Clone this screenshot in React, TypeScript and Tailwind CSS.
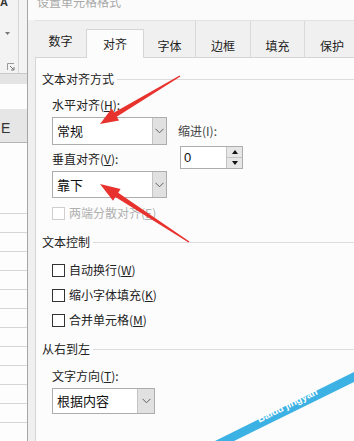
import React from "react";

function Chevron() {
  return (
    <svg width="9" height="6" viewBox="0 0 9 6">
      <polyline points="0.5,0.8 4.5,4.8 8.5,0.8" fill="none" stroke="#606060" strokeWidth="1" />
    </svg>
  );
}

function GroupHeader({ title, className }: { title: string; className: string }) {
  return (
    <div className={"flex items-center h-4 pl-[6px] " + className}>
      <span className="text-[12px] leading-4 text-[#222]">{title}</span>
      <div className="flex-1 ml-[3px] border-t border-[#dcdcdc]" />
    </div>
  );
}

function Check({ children, disabled, className }: { children: React.ReactNode; disabled?: boolean; className: string }) {
  return (
    <div className={"flex items-center h-4 " + className}>
      <div className={disabled ? "w-[13px] h-[13px] border border-[#cfcfcf] bg-white" : "w-[13px] h-[13px] border border-[#333] bg-white"} />
      <span className={disabled ? "ml-[4px] text-[12px] leading-4 text-[#b0b0b0]" : "ml-[4px] text-[12px] leading-4 text-[#222]"}>{children}</span>
    </div>
  );
}

export default function App() {
  const rows = Array.from({ length: 12 });
  return (
    <div className="w-[354px] h-[441px] overflow-hidden relative flex bg-white font-['Noto_Sans_CJK_SC','Noto_Sans',sans-serif]">
      {/* Excel background strip */}
      <div className="w-[28px] h-full flex flex-col border-r border-[#a6a6a6] bg-[#fdfdfd] shrink-0">
        <div className="h-[77px] flex bg-[#f3f3f3] border-b border-[#c8c8c8]">
          <div className="w-[19px] h-[73px] flex flex-col border-r border-[#d6d6d6]">
            <span className="-mt-[5px] text-[11px] leading-[14px] font-bold text-[#333] font-['Liberation_Sans',sans-serif]">A</span>
            <svg className="mt-[23px] ml-[5px]" width="5" height="3" viewBox="0 0 5 3">
              <polygon points="0,0 5,0 2.5,3" fill="#777" />
            </svg>
            <svg className="mt-[28px] ml-[7px]" width="8" height="8" viewBox="0 0 8 8">
              <polyline points="0.5,7 0.5,0.5 7,0.5" fill="none" stroke="#999" strokeWidth="1" />
              <line x1="3" y1="3" x2="7" y2="7" stroke="#777" strokeWidth="1" />
              <polyline points="7,4 7,7 4,7" fill="none" stroke="#777" strokeWidth="1" />
            </svg>
          </div>
          <div className="flex-1" />
        </div>
        <div className="h-[10px] bg-[#e4e4e4]" />
        <div className="h-[26px] bg-[#fdfdfd]" />
        <div className="h-[35px] bg-[#e6e6e6] border-b border-[#b4b4b4] flex items-end pb-[6px] pl-[1px]">
          <span className="text-[14px] leading-4 text-[#333] font-['Liberation_Sans',sans-serif]">E</span>
        </div>
        <div className="h-[72px]" />
        {rows.map((_, i) => (
          <div key={i} className="h-[19px] shrink-0 border-t border-[#d6d6d6]" />
        ))}
      </div>

      {/* Dialog */}
      <div className="flex-1 flex flex-col">
        <div className="h-[20px] bg-[#fbfbfb] overflow-hidden">
          <div className="-mt-[6px] ml-[9px] text-[12px] leading-4 text-[#a8a8a8]">设置单元格格式</div>
        </div>
        <div className="flex-1 flex flex-col bg-[#f0f0f0] pl-[7px]">
          {/* tabs */}
          <div className="h-[37px] flex items-end border-t border-[#e2e2e2] shrink-0">
            <div className="w-[51px] h-[36px] flex justify-center pt-[12px] text-[12px] leading-4 text-[#222]">数字</div>
            <div className="relative z-10 -mb-px w-[58px] h-[29px] bg-[#fcfcfc] border-x border-t border-[#d5d5d5] flex justify-center pt-[6px] text-[12px] leading-4 text-[#222]">对齐</div>
            <div className="w-[51px] h-[36px] flex justify-center pt-[17px] text-[12px] leading-4 text-[#222]">字体</div>
            <div className="w-[55px] h-[36px] flex justify-center pt-[17px] border-l border-[#d9d9d9] text-[12px] leading-4 text-[#222]">边框</div>
            <div className="w-[54px] h-[36px] flex justify-center pt-[17px] border-l border-[#d9d9d9] text-[12px] leading-4 text-[#222]">填充</div>
            <div className="w-[55px] h-[36px] flex justify-center pt-[17px] border-l border-[#d9d9d9] text-[12px] leading-4 text-[#222]">保护</div>
          </div>
          {/* panel */}
          <div className="flex-1 flex flex-col bg-[#fcfcfc] border-l border-t border-[#d5d5d5]">
            <GroupHeader title="文本对齐方式" className="mt-[13px]" />
            <div className="pl-[16px] flex flex-col">
              <div className="mt-[10px] h-4 text-[12px] leading-4 text-[#222]">
                水平对齐(<span className="underline">H</span>):
              </div>
              <div className="mt-[4px] flex">
                <div className="flex flex-col">
                  <div className="w-[115px] h-[28px] flex border border-[#adadad] bg-white">
                    <div className="flex-1 pl-[4px] text-[13px] leading-[26px] text-[#111]">常规</div>
                    <div className="w-[14px] bg-[#e1e1e1] border-l border-[#c4c4c4] flex items-center justify-center">
                      <Chevron />
                    </div>
                  </div>
                  <div className="mt-[6px] h-4 text-[12px] leading-4 text-[#222]">
                    垂直对齐(<span className="underline">V</span>):
                  </div>
                  <div className="mt-[4px] w-[115px] h-[27px] flex border border-[#adadad] bg-white">
                    <div className="flex-1 pl-[4px] text-[13px] leading-[25px] text-[#111]">靠下</div>
                    <div className="w-[14px] bg-[#e1e1e1] border-l border-[#c4c4c4] flex items-center justify-center">
                      <Chevron />
                    </div>
                  </div>
                </div>
                <div className="ml-[11px] flex flex-col">
                  <div className="mt-[6px] h-4 text-[12px] leading-4 text-[#444]">缩进(I):</div>
                  <div className="mt-[7px] ml-[2px] w-[63px] h-[23px] flex border border-[#adadad] bg-white">
                    <div className="flex-1 pl-[3px] text-[13px] leading-[21px] text-[#111] font-['Liberation_Sans',sans-serif]">0</div>
                    <div className="w-[16px] flex flex-col border-l border-[#c4c4c4]">
                      <div className="flex-1 bg-[#e6e6e6] border-b border-[#c4c4c4] flex items-center justify-center">
                        <svg width="6" height="4" viewBox="0 0 6 4"><polygon points="0,4 6,4 3,0" fill="#111" /></svg>
                      </div>
                      <div className="flex-1 bg-[#e6e6e6] flex items-center justify-center">
                        <svg width="6" height="4" viewBox="0 0 6 4"><polygon points="0,0 6,0 3,4" fill="#111" /></svg>
                      </div>
                    </div>
                  </div>
                </div>
              </div>
              <Check disabled className="mt-[7px]">
                两端分散对齐(<span className="underline">E</span>)
              </Check>
            </div>
            <GroupHeader title="文本控制" className="mt-[13px]" />
            <div className="pl-[16px] flex flex-col">
              <Check className="mt-[12px]">
                自动换行(<span className="underline">W</span>)
              </Check>
              <Check className="mt-[9px]">
                缩小字体填充(<span className="underline">K</span>)
              </Check>
              <Check className="mt-[9px]">
                合并单元格(<span className="underline">M</span>)
              </Check>
            </div>
            <GroupHeader title="从右到左" className="mt-[13px]" />
            <div className="pl-[16px] flex flex-col">
              <div className="mt-[11px] h-4 text-[12px] leading-4 text-[#222]">
                文字方向(<span className="underline">T</span>):
              </div>
              <div className="mt-[4px] w-[103px] h-[26px] flex border border-[#adadad] bg-white">
                <div className="flex-1 pl-[4px] text-[13px] leading-[24px] text-[#111]">根据内容</div>
                <div className="w-[17px] bg-[#e1e1e1] border-l border-[#c4c4c4] flex items-center justify-center">
                  <Chevron />
                </div>
              </div>
            </div>
          </div>
        </div>
      </div>

      {/* overlays: red annotation arrows + watermark */}
      <svg className="absolute left-0 top-0 pointer-events-none" width="354" height="441" viewBox="0 0 354 441">
        <polygon
          points="180.4,76.6 116.7,116.7 119.1,120.6 100,124 111.7,108.6 114.1,112.5 179.6,75.4"
          fill="#e8322d"
        />
        <polygon
          points="189.4,241.4 118.2,192.8 120.6,189.0 100,184 113.0,200.8 115.4,197.0 188.6,242.6"
          fill="#e8322d"
        />
        <polygon points="215,441 354,372 354,382 234,441" fill="#3bb2e3" />
      </svg>
      <span className="absolute left-[258px] top-[414px] origin-left -rotate-[26deg] text-[10px] leading-3 font-bold text-white font-['Liberation_Sans',sans-serif] pointer-events-none">
        Baidu jingyan
      </span>
    </div>
  );
}
